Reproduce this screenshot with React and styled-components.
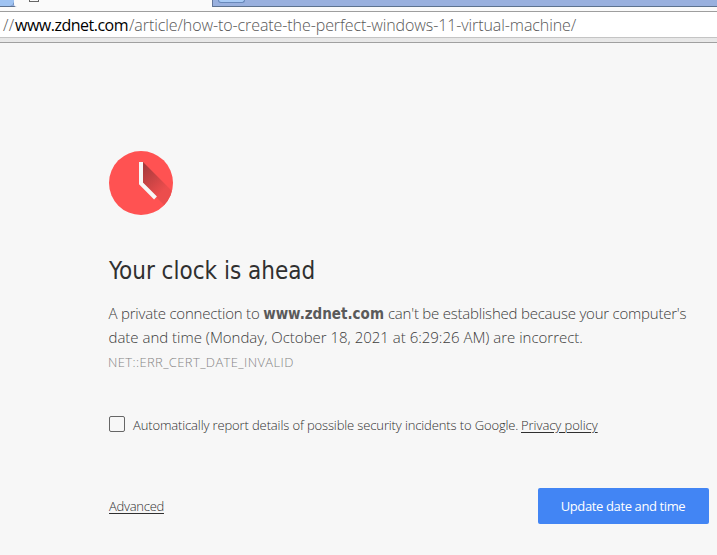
import React from 'react';
import styled, { createGlobalStyle } from 'styled-components';

const light = '"Open Sans", "Noto Sans", sans-serif';
const solid = '"DejaVu Sans Condensed", "DejaVu Sans", sans-serif';

const GlobalStyle = createGlobalStyle`
  * { box-sizing: border-box; }
  body { margin: 0; background: #f7f7f7; font-family: ${light}; overflow: hidden; }
`;

const Browser = styled.div`
  width: 717px;
  height: 555px;
  display: flex;
  flex-direction: column;
  overflow: hidden;
`;

const TabStrip = styled.div`
  height: 7px;
  flex: none;
  display: flex;
  background: #99b0de;
  border-bottom: 1px solid #5d728f;
`;

const PreviousTab = styled.div`
  width: 15px;
  height: 6px;
  background: #9fc3f2;
  border-right: 1px solid #5d7dac;
  border-bottom-right-radius: 5px;
`;

const ActiveTab = styled.div`
  width: 199px;
  height: 7px;
  margin-left: -1px;
  padding-left: 15px;
  background: #fafafa;
  border-right: 1px solid #64779b;
  border-bottom-left-radius: 3px;
`;

const PageIcon = styled.div`
  width: 10px;
  height: 2px;
  border: 1px solid #666;
  border-top: 0;
`;

const NewTab = styled.div`
  width: 27px;
  height: 3px;
  margin-left: 5px;
  background: #a9cbf6;
  border: 1px solid #6888ba;
  border-top: 0;
  border-radius: 0 0 4px 4px;
`;

const Toolbar = styled.div`
  height: 36px;
  flex: none;
  padding-top: 4px;
  background: linear-gradient(#fafafa 0, #fafafa 28px, #e6e6e6 31px, #e9e9e9 100%);
  border-bottom: 1px solid #a0a0a0;
`;

const AddressBar = styled.div`
  height: 27px;
  display: flex;
  padding-left: 3px;
  background: #fff;
  border-top: 1px solid #9e9e9e;
  border-bottom: 1px solid #c4c4c4;
  font-size: 16px;
  line-height: 27px;
  white-space: pre;
`;

const UrlPart = styled.span`
  width: ${(p) => p.$width}px;
  flex: none;
  color: ${(p) => (p.$host ? '#000' : '#585858')};
  font-weight: ${(p) => (p.$host ? 400 : 300)};
  letter-spacing: ${(p) => p.$spacing}px;
`;

const Page = styled.main`
  flex: 1;
  display: flex;
  flex-direction: column;
  padding: 108px 8px 0 109px;
  background: #f7f7f7;
`;

const ClockIcon = styled.svg`
  display: block;
  width: 64px;
  height: 64px;
  flex: none;
`;

const Title = styled.h1`
  margin: 42px 0 0;
  font: 400 24px/29px ${solid};
  color: #303030;
  white-space: nowrap;
`;

const Message = styled.p`
  margin: 15px 0 0 -0.5px;
  font-size: 15px;
  font-weight: 300;
  line-height: 24px;
  color: #3c3c3c;
  white-space: pre;
`;

const Line = styled.span`
  display: block;
  height: 24px;
`;

const Run = styled.span`
  letter-spacing: ${(p) => p.$spacing}px;
`;

const Host = styled.strong`
  font-family: ${solid};
  font-weight: 700;
  color: #5a5a5a;
  margin-right: 4px;
`;

const ErrorCode = styled.div`
  margin: 1px 0 0 -1px;
  font-size: 13px;
  font-weight: 300;
  line-height: 24px;
  letter-spacing: 0.37px;
  color: #858585;
`;

const Report = styled.label`
  display: flex;
  align-items: center;
  height: 20px;
  margin-top: 40px;
  font-size: 13px;
  font-weight: 300;
  color: #303030;
  white-space: nowrap;
`;

const Checkbox = styled.span`
  width: 16px;
  height: 16px;
  margin: -1px 8px 0 0;
  border: 1px solid #666;
  border-radius: 2px;
`;

const ReportText = styled.span`
  width: 388px;
  letter-spacing: -0.13px;
  padding-top: 2px;
`;

const Link = styled.a`
  font-size: 13px;
  font-weight: 300;
  color: #303030;
  letter-spacing: ${(p) => p.$spacing}px;
  text-decoration: underline;
  text-decoration-thickness: 1px;
  text-underline-offset: 2px;
  padding-top: 2px;
`;

const Actions = styled.div`
  display: flex;
  align-items: center;
  justify-content: space-between;
  margin-top: 54px;

  ${Link} { padding: 0 0 1px; }
`;

const PrimaryButton = styled.button`
  width: 171px;
  height: 36px;
  padding: 0 1px 1px 0;
  border: 0;
  border-radius: 2px;
  background: #4285f4;
  color: #fff;
  font: 400 13px ${light};
  letter-spacing: -0.38px;
`;

function Clock() {
  return (
    <ClockIcon viewBox="0 0 64 64">
      <defs>
        <clipPath id="face"><circle cx="32" cy="32" r="32" /></clipPath>
        <linearGradient id="shade" gradientUnits="userSpaceOnUse" x1="32" y1="18" x2="54" y2="40">
          <stop offset="0" stopColor="#a83a3c" />
          <stop offset="1" stopColor="#ec4d4d" />
        </linearGradient>
      </defs>
      <circle cx="32" cy="32" r="32" fill="#ff5252" />
      <path clipPath="url(#face)" fill="url(#shade)" d="M34 11 L66 43 L66 65 L46 45 L34 32 Z" />
      <path d="M32 11 V32.5 L46.5 47" fill="none" stroke="#f7f7f7" strokeWidth="4" />
    </ClockIcon>
  );
}

export default function App() {
  return (
    <Browser>
      <GlobalStyle />
      <TabStrip>
        <PreviousTab />
        <ActiveTab><PageIcon /></ActiveTab>
        <NewTab />
      </TabStrip>
      <Toolbar>
        <AddressBar>
          <UrlPart $width={12} $spacing={0.3}>//</UrlPart>
          <UrlPart $host $width={114} $spacing={-0.5}>www.zdnet.com</UrlPart>
          <UrlPart $width={450} $spacing={-0.09}>/article/how-to-create-the-perfect-windows-11-virtual-machine/</UrlPart>
        </AddressBar>
      </Toolbar>
      <Page>
        <Clock />
        <Title>Your clock is ahead</Title>
        <Message>
          <Line>
            <Run $spacing={-0.21}>{'A private connection to '}</Run>
            <Host>www.zdnet.com</Host>
            <Run $spacing={-0.22}>can't be established because your computer's</Run>
          </Line>
          <Line>
            <Run $spacing={-0.01}>date and time (Monday, October 18, 2021 at 6:29:26 AM) are incorrect.</Run>
          </Line>
        </Message>
        <ErrorCode>NET::ERR_CERT_DATE_INVALID</ErrorCode>
        <Report>
          <Checkbox />
          <ReportText>Automatically report details of possible security incidents to Google.</ReportText>
          <Link $spacing={-0.05}>Privacy policy</Link>
        </Report>
        <Actions>
          <Link $spacing={-0.27}>Advanced</Link>
          <PrimaryButton>Update date and time</PrimaryButton>
        </Actions>
      </Page>
    </Browser>
  );
}
